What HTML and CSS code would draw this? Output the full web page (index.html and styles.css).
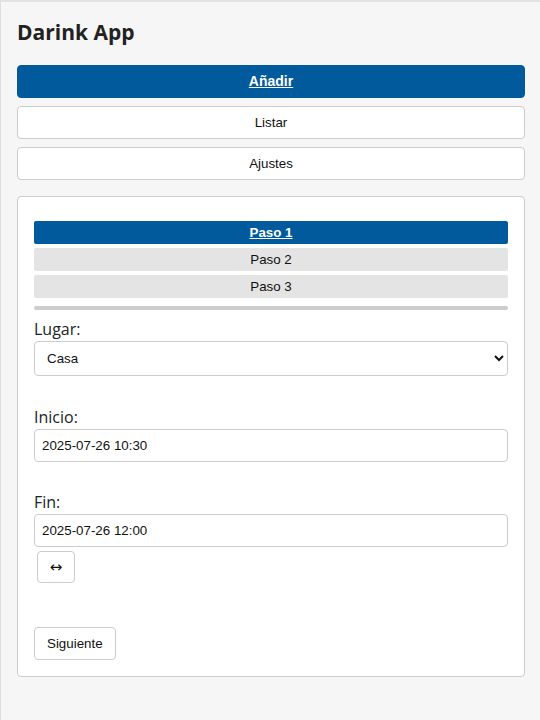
FILE: index.html
```html
<!DOCTYPE html>
<html lang="es">
<head>
<meta charset="utf-8">
<title>Darink App</title>
<link rel="stylesheet" href="styles.css">
</head>
<body>
<div class="page">
  <h1 class="title">Darink App</h1>
  <nav class="nav">
    <button class="btn nav-btn active">Añadir</button>
    <button class="btn nav-btn">Listar</button>
    <button class="btn nav-btn">Ajustes</button>
  </nav>
  <section class="card">
    <div class="steps">
      <div class="step active">Paso 1</div>
      <div class="step">Paso 2</div>
      <div class="step">Paso 3</div>
    </div>
    <div class="progress"></div>
    <div class="field first">
      <label class="label" for="lugar">Lugar:</label>
      <select id="lugar" class="control select">
        <option>Casa</option>
      </select>
    </div>
    <div class="field second">
      <label class="label" for="inicio">Inicio:</label>
      <input id="inicio" class="control input" type="text" value="2025-07-26 10:30">
    </div>
    <div class="field">
      <label class="label" for="fin">Fin:</label>
      <input id="fin" class="control input" type="text" value="2025-07-26 12:00">
      <button class="btn swap">↔</button>
    </div>
    <button class="btn next">Siguiente</button>
  </section>
</div>
</body>
</html>
```

FILE: styles.css
```css
* { box-sizing: border-box; }
html, body { margin: 0; padding: 0; background: #f6f6f6; }
body { font-family: "Open Sans", "Noto Sans", sans-serif; color: #222; }
.page {
  min-height: 720px;
  border-top: 2px solid #e3e1e5;
  border-left: 1px solid #dedede;
  padding: 16px 15px 16px 16px;
}
.title {
  margin: 0 0 19px;
  font-size: 21px;
  line-height: 28px;
  font-weight: 700;
  color: #222;
}
.nav { display: flex; flex-direction: column; gap: 8px; margin-bottom: 16px; }
.btn {
  font-family: "Liberation Sans", Arial, sans-serif;
  font-size: 13.33px;
  line-height: 15px;
  color: #111;
  background: #fff;
  border: 1px solid #cccccc;
  border-radius: 4px;
  padding: 8px 12px;
  margin: 0;
}
.nav-btn { width: 100%; }
.nav-btn.active {
  background: #005a9c;
  border-color: #005a9c;
  color: #fff;
  font-weight: 700;
  font-size: 14px;
  text-decoration: underline;
}
.card {
  background: #fff;
  border: 1px solid #cccccc;
  border-radius: 4px;
  padding: 24px 16px 16px;
}
.steps { display: flex; flex-direction: column; gap: 4px; }
.step {
  font-family: "Liberation Sans", Arial, sans-serif;
  font-size: 13.33px;
  line-height: 15px;
  padding: 4px;
  text-align: center;
  background: #e4e4e4;
  color: #111;
  border-radius: 2px;
}
.step.active {
  background: #005a9c;
  color: #fff;
  font-weight: 700;
  text-decoration: underline;
}
.progress {
  height: 4px;
  margin-top: 8px;
  background: #cccccc;
  border-radius: 2px;
}
.field { display: flex; flex-direction: column; align-items: flex-start; margin-top: 30px; }
.field.first { margin-top: 9px; }
.field.second { margin-top: 31px; }
.label {
  font-size: 16px;
  line-height: 20px;
  color: #222;
  margin-bottom: 2px;
}
.control {
  width: 100%;
  font-family: "Liberation Sans", Arial, sans-serif;
  font-size: 13.33px;
  color: #111;
  background: #fff;
  border: 1px solid #cccccc;
  border-radius: 4px;
  margin: 0;
}
.input { height: 33px; padding: 8px 7px; }
.select { height: 35px; padding: 8px 8px; }
.swap {
  margin: 4px 0 0 3px;
  padding: 0;
  width: 38px;
  height: 32px;
  font-family: "DejaVu Sans", sans-serif;
  font-size: 15px;
  line-height: 30px;
}
.next { margin-top: 44px; }
```
